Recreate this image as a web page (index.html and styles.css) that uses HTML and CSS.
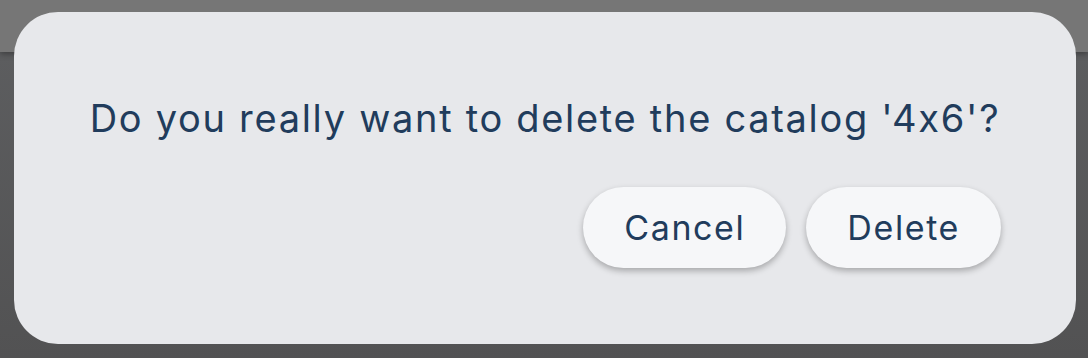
FILE: index.html
```html
<!DOCTYPE html>
<html lang="en">
  <head>
    <meta charset="UTF-8" />
    <meta name="viewport" content="width=device-width, initial-scale=1.0" />
    <title>Delete catalog</title>
    <link rel="stylesheet" href="styles.css">
  </head>
  <body>
    <div class="topbar"></div>
    <div class="overlay">
      <div class="dialog">
        <div class="dialog_text">Do you really want to delete the catalog '4x6'?</div>
        <div class="dialog_buttons">
          <button type="button" class="pill">Cancel</button>
          <button type="button" class="pill">Delete</button>
        </div>
      </div>
    </div>
  </body>
</html>
```

FILE: styles.css
```css
html,
body {
  margin: 0;
  height: 100%;
}
body {
  background: linear-gradient(#5e5f61, #525253);
  font-family: Inter, "Noto Sans", sans-serif;
  overflow: hidden;
}
.topbar {
  height: 52px;
  background: #767676;
  box-shadow: 0 2px 6px rgba(0, 0, 0, 0.35);
}
.overlay {
  position: absolute;
  top: 0;
  left: 0;
  right: 0;
  bottom: 0;
  padding: 12px 12px 14px 14px;
  box-sizing: border-box;
}
.dialog {
  width: 1062px;
  height: 332px;
  box-sizing: border-box;
  background: #e7e8eb;
  border-radius: 44px;
  padding: 78px 75px 0 75px;
  display: flex;
  flex-direction: column;
}
.dialog_text {
  color: #213c5c;
  font-size: 38px;
  line-height: 56px;
  text-align: center;
  letter-spacing: 1.7px;
}
.dialog_buttons {
  display: flex;
  justify-content: flex-end;
  gap: 20px;
  margin-top: 41px;
}
.pill {
  height: 81px;
  padding: 0 41px;
  border: none;
  border-radius: 41px;
  background: #f6f7f9;
  color: #213c5c;
  font-family: Inter, "Noto Sans", sans-serif;
  font-size: 34px;
  letter-spacing: 1.6px;
  box-shadow: 0 3px 6px rgba(0, 0, 0, 0.28);
}
```
